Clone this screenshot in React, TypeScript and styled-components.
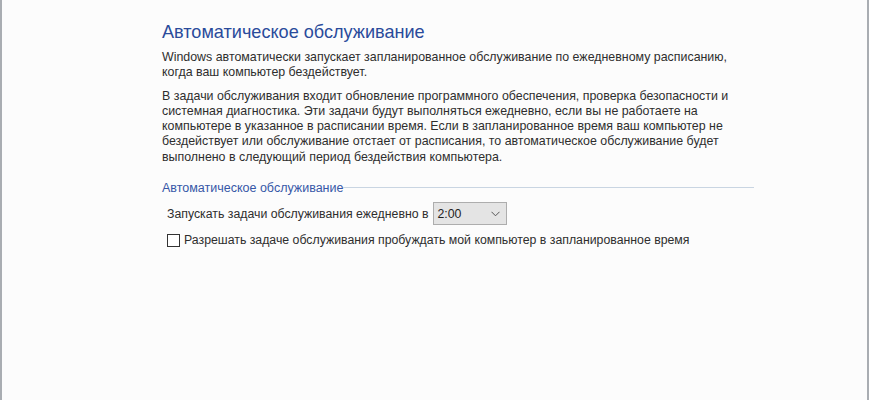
import React, { useState } from 'react';
import styled, { createGlobalStyle } from 'styled-components';

const GlobalStyle = createGlobalStyle`
  html, body {
    margin: 0;
    padding: 0;
    background: #ffffff;
  }
  body {
    font-family: "Liberation Sans", Arial, sans-serif;
  }
`;

const Window = styled.div`
  box-sizing: border-box;
  width: 869px;
  height: 400px;
  background: #fcfcfc;
  border-left: 2px solid #a9adb2;
  border-right: 2px solid #a9adb2;
  padding: 22px 0 0 160px;
  overflow: hidden;
`;

const Content = styled.div`
  width: 592px;
  display: flex;
  flex-direction: column;
`;

const Title = styled.h1`
  margin: 0;
  font-family: "Liberation Sans", Arial, sans-serif;
  font-weight: normal;
  font-size: 18.1px;
  line-height: 20px;
  color: #2a4b9b;
`;

const Paragraph = styled.p<{ $top: number }>`
  margin: ${({ $top }) => $top}px 0 0;
  font-size: 12.4px;
  line-height: 15.3px;
  color: #2e2e2e;
  white-space: nowrap;
`;

const Group = styled.fieldset`
  margin: 15px 0 0;
  padding: 0;
  border: none;
  display: flex;
  flex-direction: column;
`;

const GroupHeader = styled.div`
  display: flex;
  align-items: center;
  height: 16px;
`;

const GroupTitle = styled.span`
  font-size: 12.5px;
  color: #3657a7;
  white-space: nowrap;
`;

const GroupLine = styled.span`
  flex: 1;
  height: 1px;
  background: #c9d5e2;
  margin-top: -1px;
`;

const Row = styled.div<{ $top: number }>`
  display: flex;
  align-items: center;
  padding-left: 5px;
  margin-top: ${({ $top }) => $top}px;
  font-size: 12.3px;
  color: #2e2e2e;
  white-space: nowrap;
`;

const Select = styled.div`
  box-sizing: border-box;
  display: flex;
  align-items: center;
  justify-content: space-between;
  width: 74px;
  height: 23px;
  margin-left: 4px;
  padding: 0 6px 0 4px;
  background: #e4e4e4;
  border: 1px solid #adadad;
  font-size: 12.3px;
  color: #222;
`;

const CheckBox = styled.span<{ $checked: boolean }>`
  box-sizing: border-box;
  width: 13px;
  height: 13px;
  border: 1px solid #333;
  background: #fff;
  margin-right: 4px;
  display: inline-flex;
  align-items: center;
  justify-content: center;
  font-size: 10px;
  line-height: 1;
  cursor: pointer;
`;

const Chevron = () => (
  <svg width="9" height="6" viewBox="0 0 9 6">
    <path d="M0.5 0.8 L4.5 4.8 L8.5 0.8" fill="none" stroke="#555" strokeWidth="1" />
  </svg>
);

const App = () => {
  const [wake, setWake] = useState(false);

  return (
    <>
      <GlobalStyle />
      <Window>
        <Content>
          <Title>Автоматическое обслуживание</Title>
          <Paragraph $top={8}>
            Windows автоматически запускает запланированное обслуживание по ежедневному расписанию,
            <br />
            когда ваш компьютер бездействует.
          </Paragraph>
          <Paragraph $top={8}>
            В задачи обслуживания входит обновление программного обеспечения, проверка безопасности и
            <br />
            системная диагностика. Эти задачи будут выполняться ежедневно, если вы не работаете на
            <br />
            компьютере в указанное в расписании время. Если в запланированное время ваш компьютер не
            <br />
            бездействует или обслуживание отстает от расписания, то автоматическое обслуживание будет
            <br />
            выполнено в следующий период бездействия компьютера.
          </Paragraph>
          <Group>
            <GroupHeader>
              <GroupTitle>Автоматическое обслуживание</GroupTitle>
              <GroupLine />
            </GroupHeader>
            <Row $top={6}>
              Запускать задачи обслуживания ежедневно в
              <Select>
                <span>2:00</span>
                <Chevron />
              </Select>
            </Row>
            <Row $top={8}>
              <CheckBox $checked={wake} onClick={() => setWake(!wake)}>{wake ? '✓' : ''}</CheckBox>
              Разрешать задаче обслуживания пробуждать мой компьютер в запланированное время
            </Row>
          </Group>
        </Content>
      </Window>
    </>
  );
};

export default App;
